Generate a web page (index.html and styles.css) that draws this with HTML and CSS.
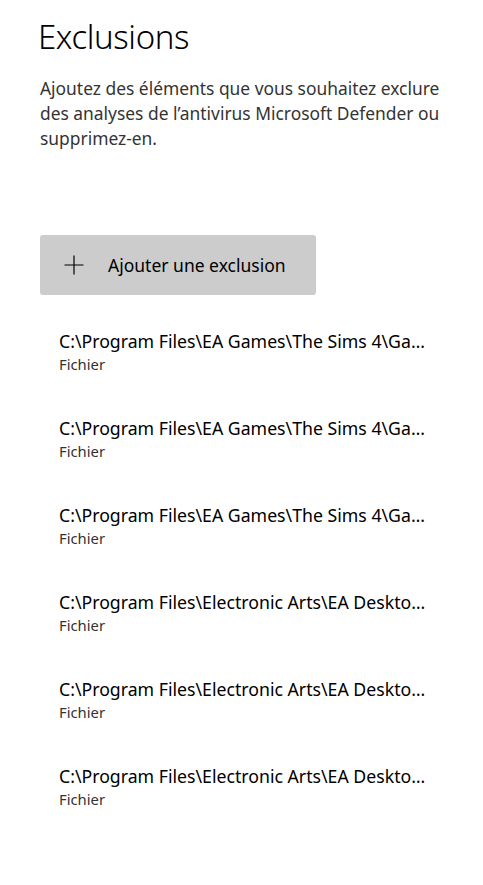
FILE: index.html
```html
<!DOCTYPE html>
<html lang="fr">
<head>
<meta charset="UTF-8" />
<meta name="viewport" content="width=device-width, initial-scale=1" />
<title>Exclusions</title>
<link rel="stylesheet" href="styles.css">
</head>
<body>
<main class="page">
  <h1 class="title">Exclusions</h1>
  <p class="intro">Ajoutez des éléments que vous souhaitez exclure des analyses de l’antivirus Microsoft Defender ou supprimez-en.</p>

  <button class="add-btn" type="button">
    <svg class="add-icon" width="20" height="20" viewBox="0 0 20 20" aria-hidden="true">
      <path d="M10 0.5V19.5M0.5 10H19.5" stroke="#000" stroke-width="1.2" fill="none" />
    </svg>
    <span>Ajouter une exclusion</span>
  </button>

  <ul class="list">
    <li class="item">
      <div class="item-path">C:\Program Files\EA Games\The Sims 4\Game\Bin\TS4_x64.exe</div>
      <div class="item-type">Fichier</div>
    </li>
    <li class="item">
      <div class="item-path">C:\Program Files\EA Games\The Sims 4\Game\Bin\TS4.exe</div>
      <div class="item-type">Fichier</div>
    </li>
    <li class="item">
      <div class="item-path">C:\Program Files\EA Games\The Sims 4\Game\Bin_LE\TS4_x64.exe</div>
      <div class="item-type">Fichier</div>
    </li>
    <li class="item">
      <div class="item-path">C:\Program Files\Electronic Arts\EA Desktop\EA Desktop\EADesktop.exe</div>
      <div class="item-type">Fichier</div>
    </li>
    <li class="item">
      <div class="item-path">C:\Program Files\Electronic Arts\EA Desktop\EA Desktop\EABackgroundService.exe</div>
      <div class="item-type">Fichier</div>
    </li>
    <li class="item">
      <div class="item-path">C:\Program Files\Electronic Arts\EA Desktop\EA Desktop\EALauncher.exe</div>
      <div class="item-type">Fichier</div>
    </li>
  </ul>
</main>
</body>
</html>
```

FILE: styles.css
```css
body {
  margin: 0;
  background: #fff;
  color: #000;
  font-family: "Noto Sans", "Open Sans", sans-serif;
}
.page {
  padding: 14px 0 0 38px;
  width: 420px;
}
.title {
  margin: 0;
  font-size: 33px;
  font-weight: 300;
  line-height: 46px;
  letter-spacing: -0.4px;
}
.intro {
  margin: 16px 0 0 2px;
  font-size: 17.4px;
  line-height: 25px;
  color: #333;
  width: 410px;
}
.add-btn {
  margin: 84px 0 0 2px;
  display: flex;
  align-items: center;
  gap: 24px;
  width: 276px;
  height: 60px;
  padding: 0 0 0 24px;
  border: none;
  border-radius: 3px;
  background: #cccccc;
  font-family: inherit;
  font-size: 17.5px;
  color: #000;
  cursor: pointer;
}
.add-icon {
  flex: none;
}
.list {
  list-style: none;
  margin: 33px 0 0 0;
  padding: 0;
}
.item {
  height: 87px;
  padding-left: 21px;
}
.item-path {
  width: 368px;
  font-size: 17.7px;
  line-height: 26px;
  white-space: nowrap;
  overflow: hidden;
  text-overflow: ellipsis;
}
.item-type {
  font-size: 14.8px;
  line-height: 20px;
  color: #333;
}
```
